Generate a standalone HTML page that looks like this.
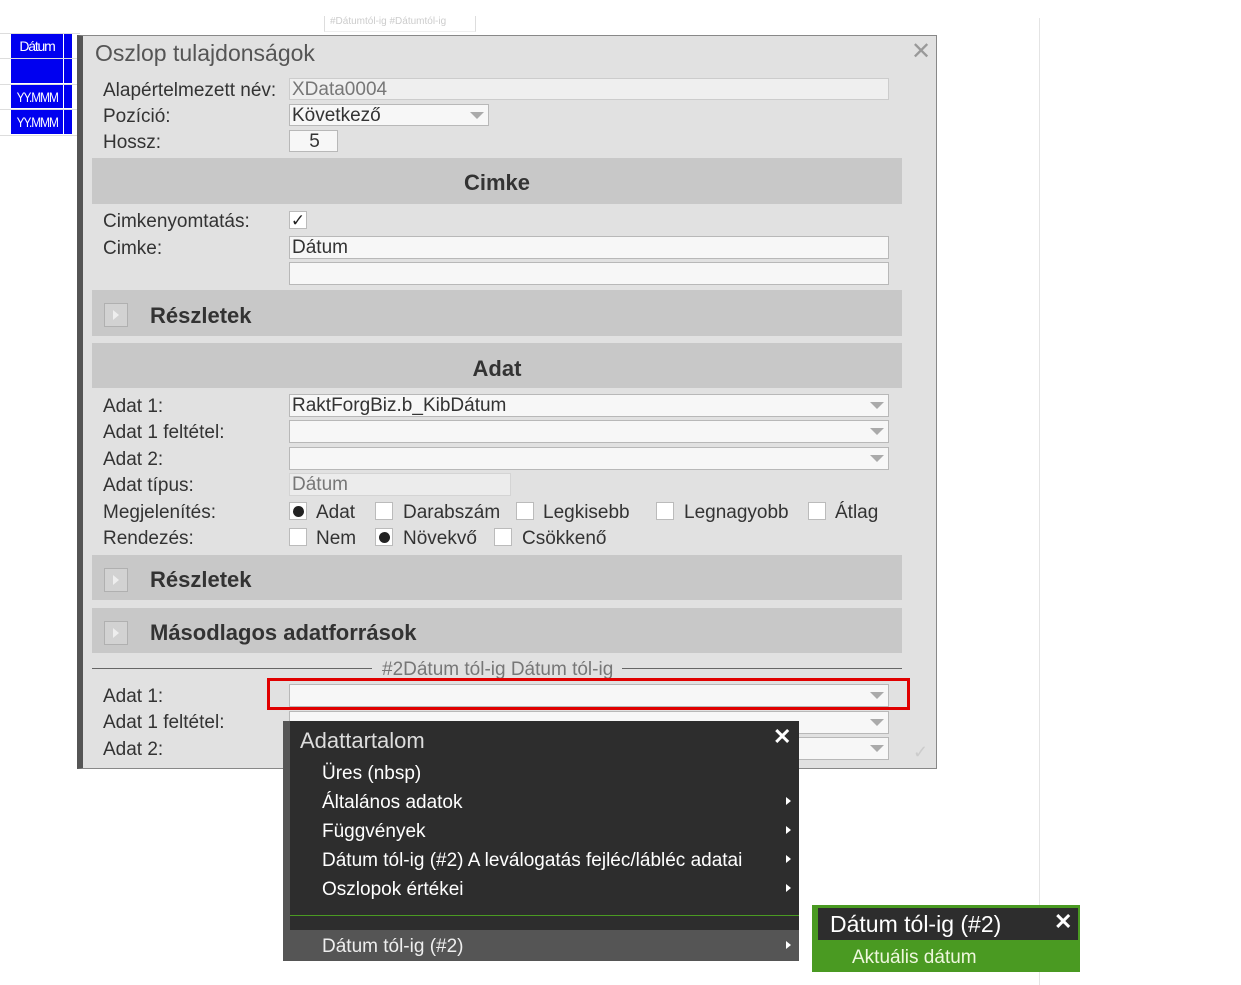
<!DOCTYPE html>
<html><head><meta charset="utf-8"><style>
*{margin:0;padding:0;box-sizing:border-box}
body{width:1241px;height:985px;background:#fff;position:relative;overflow:hidden;font-family:"Liberation Sans",Arial,sans-serif;color:#333}
.a{position:absolute}
.lbl{position:absolute;left:103px;font-size:19px;color:#333;line-height:22px;margin-top:2px}
.inp{position:absolute;background:#f7f7f7;border:1px solid #b8b8b8;font-size:19px;line-height:22px;padding-left:2px;color:#333}
.hdr{position:absolute;left:92px;width:810px;background:#c8c8c8;font-weight:bold;font-size:22px;color:#333}
.arr{position:absolute;right:4px;top:7px;width:0;height:0;border-left:7px solid transparent;border-right:7px solid transparent;border-top:7px solid #aaa}
.cb{position:absolute;width:18px;height:18px;background:#fff;border:1px solid #bbb}
.dot{position:absolute;left:3px;top:3px;width:11px;height:11px;border-radius:50%;background:#222}
.opt{position:absolute;font-size:19px;line-height:22px;color:#333;margin-top:2px}
.ibox{position:absolute;left:12px;top:13px;width:24px;height:24px;border:1px solid #b0b0b0;background:#d2d2d2}
.ibox:after{content:"";position:absolute;left:8px;top:6px;border-top:5px solid transparent;border-bottom:5px solid transparent;border-left:6px solid #eee}
.mi{position:absolute;left:322px;font-size:19px;color:#fff;line-height:22px;margin-top:1px}
.ma{position:absolute;left:786px;width:0;height:0;border-top:4px solid transparent;border-bottom:4px solid transparent;border-left:5px solid #fff}
.blue{position:absolute;background:#0000f0;color:#fff;font-size:14px;text-align:center;line-height:24px;letter-spacing:-1.2px;overflow:hidden;white-space:nowrap}
</style></head><body>
<div class="a" style="left:0;top:33px;width:80px;height:1px;background:#ddd"></div>
<div class="a" style="left:0;top:58px;width:80px;height:1px;background:#ddd"></div>
<div class="a" style="left:0;top:84px;width:80px;height:1px;background:#ddd"></div>
<div class="a" style="left:0;top:109px;width:80px;height:1px;background:#ddd"></div>
<div class="a" style="left:0;top:135px;width:80px;height:1px;background:#ddd"></div>
<div class="blue" style="left:11px;top:34px;width:52px;height:24px">Dátum</div>
<div class="blue" style="left:11px;top:59px;width:52px;height:24px"></div>
<div class="blue" style="left:11px;top:85px;width:52px;height:23px"><span style="display:inline-block;transform:scaleX(.85)">YY.MMM</span></div>
<div class="blue" style="left:11px;top:110px;width:52px;height:24px"><span style="display:inline-block;transform:scaleX(.85)">YY.MMM</span></div>
<div class="blue" style="left:64px;top:34px;width:8px;height:24px"></div>
<div class="blue" style="left:64px;top:59px;width:8px;height:24px"></div>
<div class="blue" style="left:64px;top:85px;width:8px;height:23px"></div>
<div class="blue" style="left:64px;top:110px;width:8px;height:24px"></div>
<div class="a" style="left:324px;top:16px;width:152px;height:16px;border-left:1px solid #ddd;border-right:1px solid #ddd;border-bottom:1px solid #eee;font-size:10px;color:#ccc;padding-left:5px">#Dátumtól-ig #Dátumtól-ig</div>
<div class="a" style="left:1039px;top:18px;width:1px;height:967px;background:#e4e4e4"></div>

<div class="a" style="left:77px;top:35px;width:860px;height:734px;background:#e1e1e1;border:1px solid #888;border-left:6px solid #555"></div>
<div class="a" style="left:95px;top:40px;font-size:23px;color:#555">Oszlop tulajdonságok</div>
<div class="a" style="left:911px;top:37px;font-size:24px;color:#999">✕</div>

<div class="lbl" style="top:78px">Alapértelmezett név:</div>
<div class="inp" style="left:289px;top:78px;width:600px;height:22px;background:#efefef;color:#777;border-color:#ccc">XData0004</div>
<div class="lbl" style="top:104px">Pozíció:</div>
<div class="inp" style="left:289px;top:104px;width:200px;height:22px">Következő<div class="arr"></div></div>
<div class="lbl" style="top:130px">Hossz:</div>
<div class="inp" style="left:289px;top:130px;width:49px;height:22px;text-align:center">5</div>

<div class="hdr" style="top:158px;height:46px;line-height:50px;text-align:center">Cimke</div>
<div class="lbl" style="top:209px">Cimkenyomtatás:</div>
<div class="cb" style="left:289px;top:211px;font-size:17px;line-height:17px;text-align:center;color:#222">✓</div>
<div class="lbl" style="top:236px">Cimke:</div>
<div class="inp" style="left:289px;top:236px;width:600px;height:23px">Dátum</div>
<div class="inp" style="left:289px;top:262px;width:600px;height:23px"></div>

<div class="hdr" style="top:290px;height:46px;line-height:52px;padding-left:58px"><div class="ibox"></div>Részletek</div>
<div class="hdr" style="top:343px;height:45px;line-height:52px;text-align:center">Adat</div>

<div class="lbl" style="top:394px">Adat 1:</div>
<div class="inp" style="left:289px;top:394px;width:600px;height:23px">RaktForgBiz.b_KibDátum<div class="arr"></div></div>
<div class="lbl" style="top:420px">Adat 1 feltétel:</div>
<div class="inp" style="left:289px;top:420px;width:600px;height:23px"><div class="arr"></div></div>
<div class="lbl" style="top:447px">Adat 2:</div>
<div class="inp" style="left:289px;top:447px;width:600px;height:23px"><div class="arr"></div></div>
<div class="lbl" style="top:473px">Adat típus:</div>
<div class="inp" style="left:289px;top:473px;width:222px;height:23px;background:#ececec;color:#777;border-color:#d4d4d4">Dátum</div>
<div class="lbl" style="top:500px">Megjelenítés:</div>
<div class="cb" style="left:289px;top:502px"><div class="dot"></div></div><div class="opt" style="left:316px;top:500px">Adat</div>
<div class="cb" style="left:375px;top:502px"></div><div class="opt" style="left:403px;top:500px">Darabszám</div>
<div class="cb" style="left:516px;top:502px"></div><div class="opt" style="left:543px;top:500px">Legkisebb</div>
<div class="cb" style="left:656px;top:502px"></div><div class="opt" style="left:684px;top:500px">Legnagyobb</div>
<div class="cb" style="left:808px;top:502px"></div><div class="opt" style="left:835px;top:500px">Átlag</div>
<div class="lbl" style="top:526px">Rendezés:</div>
<div class="cb" style="left:289px;top:528px"></div><div class="opt" style="left:316px;top:526px">Nem</div>
<div class="cb" style="left:375px;top:528px"><div class="dot"></div></div><div class="opt" style="left:403px;top:526px">Növekvő</div>
<div class="cb" style="left:494px;top:528px"></div><div class="opt" style="left:522px;top:526px">Csökkenő</div>

<div class="hdr" style="top:555px;height:45px;line-height:50px;padding-left:58px"><div class="ibox"></div>Részletek</div>
<div class="hdr" style="top:608px;height:45px;line-height:50px;padding-left:58px"><div class="ibox"></div>Másodlagos adatforrások</div>

<div class="a" style="left:92px;top:668px;width:280px;height:1px;background:#666"></div>
<div class="a" style="left:622px;top:668px;width:280px;height:1px;background:#666"></div>
<div class="a" style="left:382px;top:659px;font-size:19px;color:#777">#2Dátum tól-ig Dátum tól-ig</div>

<div class="lbl" style="top:684px">Adat 1:</div>
<div class="inp" style="left:289px;top:684px;width:600px;height:23px"><div class="arr"></div></div>
<div class="a" style="left:267px;top:678px;width:643px;height:32px;border:3px solid #e00000"></div>
<div class="lbl" style="top:710px">Adat 1 feltétel:</div>
<div class="inp" style="left:289px;top:711px;width:600px;height:23px"><div class="arr"></div></div>
<div class="lbl" style="top:737px">Adat 2:</div>
<div class="inp" style="left:289px;top:737px;width:600px;height:23px"><div class="arr"></div></div>
<div class="a" style="left:913px;top:742px;font-size:18px;color:#ccc">✓</div>

<div class="a" style="left:283px;top:721px;width:516px;height:240px;background:#555"></div>
<div class="a" style="left:290px;top:721px;width:509px;height:209px;background:#2d2d2d"></div>
<div class="a" style="left:300px;top:728px;font-size:22px;color:#ddd">Adattartalom</div>
<div class="a" style="left:773px;top:724px;font-size:22px;color:#fff;font-weight:bold">✕</div>
<div class="mi" style="top:762px">Üres (nbsp)</div>
<div class="mi" style="top:791px">Általános adatok</div><div class="ma" style="top:797px"></div>
<div class="mi" style="top:820px">Függvények</div><div class="ma" style="top:826px"></div>
<div class="mi" style="top:849px">Dátum tól-ig (#2) A leválogatás fejléc/lábléc adatai</div><div class="ma" style="top:855px"></div>
<div class="mi" style="top:878px">Oszlopok értékei</div><div class="ma" style="top:884px"></div>
<div class="a" style="left:290px;top:915px;width:509px;height:1px;background:#4a9a22"></div>
<div class="mi" style="top:935px;color:#eee">Dátum tól-ig (#2)</div><div class="ma" style="top:941px"></div>

<div class="a" style="left:812px;top:905px;width:268px;height:67px;background:#4a9a22"></div>
<div class="a" style="left:818px;top:908px;width:260px;height:32px;background:#2d2d2d"></div>
<div class="a" style="left:830px;top:911px;font-size:23px;color:#fff">Dátum tól-ig (#2)</div>
<div class="a" style="left:1054px;top:909px;font-size:22px;color:#fff;font-weight:bold">✕</div>
<div class="a" style="left:852px;top:947px;font-size:19px;color:#eef7dd">Aktuális dátum</div>
</body></html>
